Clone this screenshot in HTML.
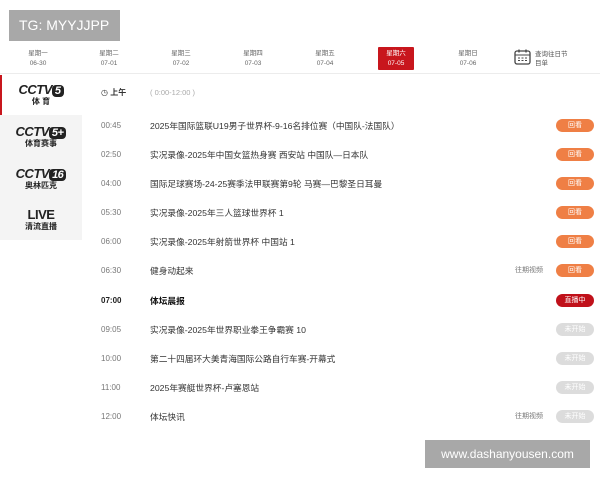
<!DOCTYPE html>
<html><head><meta charset="utf-8"><style>
*{margin:0;padding:0;box-sizing:border-box}
body{width:600px;height:480px;background:#fff;position:relative;overflow:hidden;font-family:"Liberation Sans","Noto Sans CJK SC",sans-serif;color:#333}
.abs{position:absolute}
.tg{left:9px;top:10px;width:111px;height:31px;background:#a8a8a8;color:#fff;font-size:14px;line-height:31px;padding-left:10px;white-space:nowrap}
.day{position:absolute;top:47px;width:36px;height:23px;text-align:center;font-size:6.5px;line-height:10px;color:#666;padding-top:2px}
.day.on{background:#c8161d;color:#fff;border-radius:1px}
.sep{left:0;top:73px;width:600px;height:1px;background:#ececec}
.side{left:0;top:115px;width:82px;height:125px;background:#f4f4f4}
.act{left:0;top:75px;width:2px;height:40px;background:#c8161d}
.logo{position:absolute;left:0;width:82px;text-align:center;font-weight:bold;color:#222}
.logo .c{font-size:13px;font-style:italic;letter-spacing:-.5px}
.logo .c b{background:#222;color:#fff;border-radius:4px;padding:0 3px;font-size:11px}
.logo .s{font-size:8px;line-height:9px}
.row{position:absolute;left:0;width:600px;height:14px;font-size:8.7px;line-height:14px}
.t{position:absolute;left:101px;color:#777;font-size:8px}
.n{position:absolute;left:150px;color:#333}
.p{position:absolute;left:515px;color:#777;font-size:7px}
.b{position:absolute;left:556px;width:38px;height:13px;border-radius:7px;color:#fff;font-size:7px;text-align:center;line-height:13px;top:0}
.o{background:#ef7f45}.r{background:#c0111a}.g{background:#dcdcdc}
.wm{left:425px;top:440px;width:165px;height:28px;background:#a8a8a8;color:#fff;font-size:12px;line-height:28px;text-align:center}
</style></head><body>
<div class="abs tg">TG: MYYJJPP</div>
<div class="day" style="left:20px">星期一<br>06-30</div>
<div class="day" style="left:91px">星期二<br>07-01</div>
<div class="day" style="left:163px">星期三<br>07-02</div>
<div class="day" style="left:235px">星期四<br>07-03</div>
<div class="day" style="left:307px">星期五<br>07-04</div>
<div class="day on" style="left:378px">星期六<br>07-05</div>
<div class="day" style="left:450px">星期日<br>07-06</div>
<svg class="abs" style="left:514px;top:49px" width="17" height="16" viewBox="0 0 17 16"><rect x="1" y="2" width="15" height="13" rx="2" fill="none" stroke="#444" stroke-width="1.3"/><line x1="1" y1="6" x2="16" y2="6" stroke="#444"/><line x1="5" y1="0.5" x2="5" y2="3.5" stroke="#444" stroke-width="1.3"/><line x1="12" y1="0.5" x2="12" y2="3.5" stroke="#444" stroke-width="1.3"/><g fill="#444"><rect x="4" y="8.5" width="2" height="1"/><rect x="7.5" y="8.5" width="2" height="1"/><rect x="11" y="8.5" width="2" height="1"/><rect x="4" y="11" width="2" height="1"/><rect x="7.5" y="11" width="2" height="1"/><rect x="11" y="11" width="2" height="1"/></g></svg>
<div class="abs" style="left:535px;top:50px;font-size:6.5px;line-height:9px;color:#555">查询往日节<br>目单</div>
<div class="abs sep"></div>
<div class="abs side"></div>
<div class="abs act"></div>
<div class="logo" style="top:82px"><div class="c">CCTV<b>5</b></div><div class="s">体 育</div></div>
<div class="logo" style="top:124px"><div class="c">CCTV<b>5+</b></div><div class="s">体育赛事</div></div>
<div class="logo" style="top:166px"><div class="c">CCTV<b>16</b></div><div class="s">奥林匹克</div></div>
<div class="logo" style="top:207px"><div class="c" style="font-style:normal">LIVE</div><div class="s">清流直播</div></div>
<div class="row" style="top:86px"><span class="t" style="color:#333">◷ <b>上午</b></span><span class="n" style="color:#aaa;font-size:7.5px">( 0:00-12:00 )</span></div>
<div class="row" style="top:119px"><span class="t">00:45</span><span class="n">2025年国际篮联U19男子世界杯-9-16名排位赛（中国队-法国队）</span><span class="b o">回看</span></div>
<div class="row" style="top:148px"><span class="t">02:50</span><span class="n">实况录像-2025年中国女篮热身赛 西安站 中国队—日本队</span><span class="b o">回看</span></div>
<div class="row" style="top:177px"><span class="t">04:00</span><span class="n">国际足球赛场-24-25赛季法甲联赛第9轮 马赛—巴黎圣日耳曼</span><span class="b o">回看</span></div>
<div class="row" style="top:206px"><span class="t">05:30</span><span class="n">实况录像-2025年三人篮球世界杯 1</span><span class="b o">回看</span></div>
<div class="row" style="top:235px"><span class="t">06:00</span><span class="n">实况录像-2025年射箭世界杯 中国站 1</span><span class="b o">回看</span></div>
<div class="row" style="top:264px"><span class="t">06:30</span><span class="n">健身动起来</span><span class="p">往期视频</span><span class="b o">回看</span></div>
<div class="row" style="top:294px"><span class="t" style="color:#222;font-weight:bold">07:00</span><span class="n" style="font-weight:bold;color:#111">体坛晨报</span><span class="b r">直播中</span></div>
<div class="row" style="top:323px"><span class="t">09:05</span><span class="n">实况录像-2025年世界职业拳王争霸赛 10</span><span class="b g">未开始</span></div>
<div class="row" style="top:352px"><span class="t">10:00</span><span class="n">第二十四届环大美青海国际公路自行车赛-开幕式</span><span class="b g">未开始</span></div>
<div class="row" style="top:381px"><span class="t">11:00</span><span class="n">2025年赛艇世界杯-卢塞恩站</span><span class="b g">未开始</span></div>
<div class="row" style="top:410px"><span class="t">12:00</span><span class="n">体坛快讯</span><span class="p">往期视频</span><span class="b g">未开始</span></div>
<div class="abs wm">www.dashanyousen.com</div>
</body></html>
